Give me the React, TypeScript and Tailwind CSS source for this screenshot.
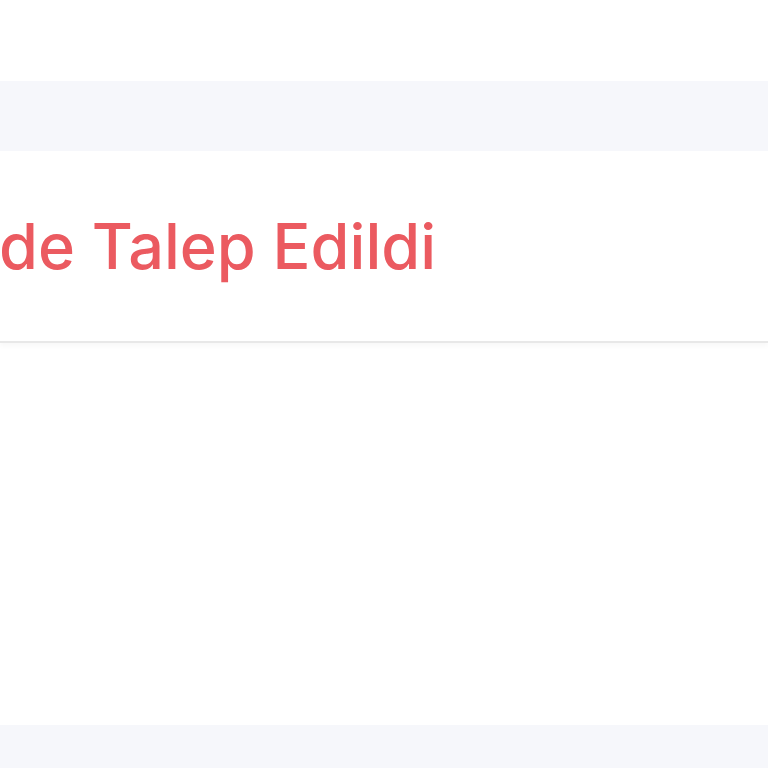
export default function App() {
  return (
    <div className="h-[768px] w-full flex flex-col bg-white overflow-hidden" style={{ fontFamily: 'Inter, "Noto Sans", sans-serif' }}>
      <div className="h-[81px] shrink-0 bg-white" />
      <div className="h-[70px] shrink-0 bg-[#f6f7fb]" />
      <div className="relative z-10 h-[192px] shrink-0 flex items-center border-b-2 border-[#e8e8e8] bg-white shadow-[0_3px_5px_rgba(0,0,0,0.03)]">
        <h1 className="ml-[-54px] whitespace-nowrap text-[63px] font-medium leading-none text-[#eb5a60]">
          İade Talep Edildi
        </h1>
      </div>
      <div className="h-[382px] shrink-0 bg-white" />
      <div className="flex-1 bg-[#f6f7fb]" />
    </div>
  );
}
